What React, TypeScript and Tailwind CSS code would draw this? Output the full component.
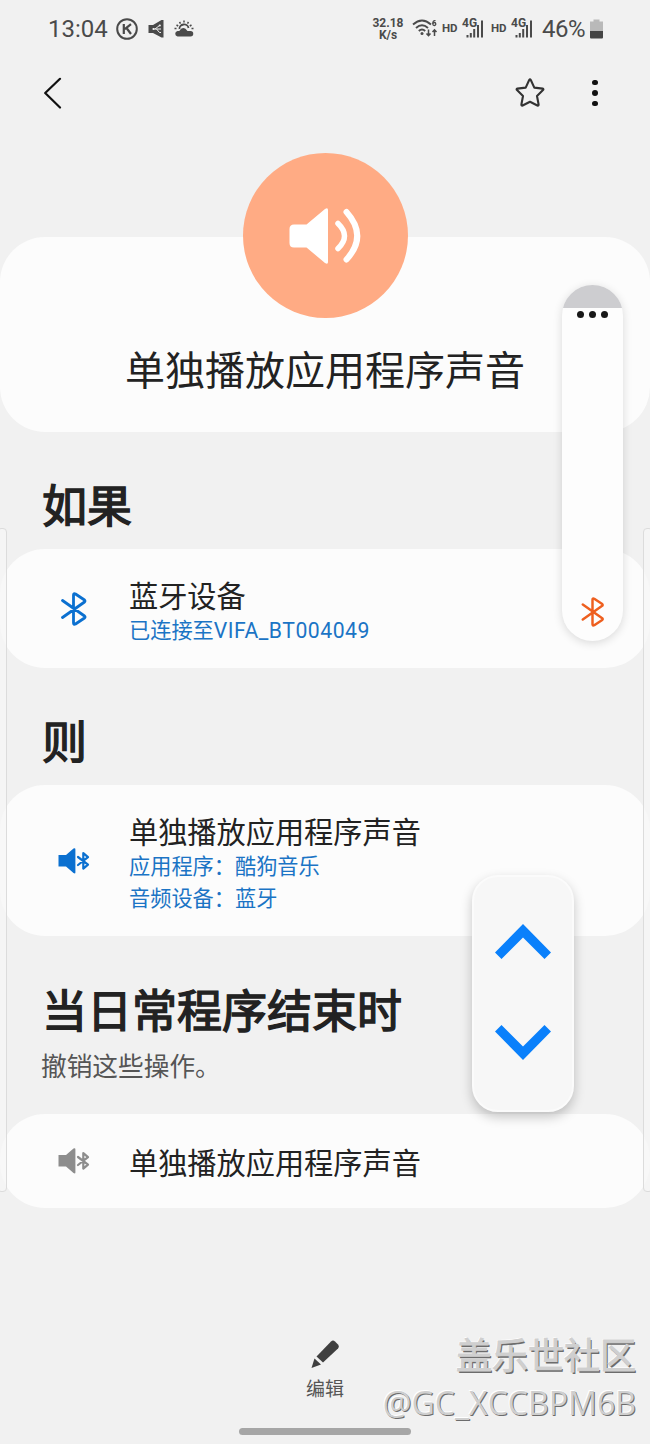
import React from 'react';

interface IconProps {
    className?: string;
}

const BluetoothIcon = ({ className }: IconProps) => (
    <svg viewBox="0 0 26 34" className={className} fill="none" stroke="currentColor" strokeWidth="2.8" strokeLinecap="round" strokeLinejoin="round">
        <path d="M2 8.5 L24 24 Q25 25 24 26 L15 32 Q13 33 13 31 V3 Q13 1 15 2 L24 8 Q25 9 24 10 L2 25.5" />
    </svg>
);

const SpeakerBluetoothIcon = ({ className }: IconProps) => (
    <svg viewBox="0 0 32 26" className={className}>
        <path d="M0.5 7 H8 L15.5 0.6 Q17.4 -0.4 17.4 1.5 V24.5 Q17.4 26 15.5 25 L8 18.6 H0.5 Z" fill="currentColor" />
        <path d="M20 9 L30 16.6 L25.3 20.6 V5.2 L30 9.2 L20 17" fill="none" stroke="currentColor" strokeWidth="2.2" strokeLinecap="round" strokeLinejoin="round" />
    </svg>
);

const SpeakerIcon = () => (
    <svg viewBox="0 0 72 58" className="h-[58px] w-[72px]" fill="none">
        <path d="M5 17.5 H17.5 L36 2 Q39 0 39 3 V55 Q39 58 36 56 L17.5 40.5 H5 Q0.5 40.5 0.5 36 V22 Q0.5 17.5 5 17.5 Z" fill="#fff" />
        <path d="M49 16.500 Q62 29 49 41.500" stroke="#fff" strokeWidth="5.500" strokeLinecap="round" />
        <path d="M57.500 5 Q79 29 57.500 52.500" stroke="#fff" strokeWidth="6" strokeLinecap="round" />
    </svg>
);

const SignalIcon = () => (
    <div className="relative h-5 w-[22px]">
        <svg viewBox="0 0 22 20" className="h-5 w-[22px]" fill="currentColor">
            <path d="M4.500 16h2v2.500h-2zM7.800 14h2v4.500h-2zM11.200 10h2v8.500h-2zM15 6h2v12.500h-2zM19 1.500h2v17h-2z" />
        </svg>
        <span className="absolute -top-[2px] left-0 text-[12px] font-bold leading-[13px]">4G</span>
    </div>
);

const StatusBar = () => (
    <div className="flex h-[57px] items-center pl-[48px] pr-[47px] text-[#4a4a4a]">
        <span className="w-[60px] whitespace-nowrap text-[24px] leading-none">13:04</span>
        <svg viewBox="0 0 22 22" className="ml-2 size-[22px]" fill="none" stroke="currentColor" strokeWidth="2">
            <circle cx="11" cy="11" r="9.800" />
            <path d="M7.800 6v10M15 6.200l-6.200 5M10.500 10l4.500 6" strokeWidth="2.200" />
        </svg>
        <svg viewBox="0 0 16 20" className="ml-[10px] h-5 w-4" fill="none">
            <path d="M0.500 6H5L13.500 1H15.500V18.500H13.500L5 14H0.500Z" fill="currentColor" />
            <path d="M5 10h8M7 10l4.500-3.500M8.500 10l3 3.500h1.500" stroke="#f1f1f1" strokeWidth="1" />
            <circle cx="11.800" cy="6.500" r="1.100" fill="#f1f1f1" />
            <circle cx="5.500" cy="10" r="1.100" fill="#f1f1f1" />
        </svg>
        <svg viewBox="0 0 20 18" className="ml-[10px] h-[18px] w-5" fill="none">
            <path d="M10 0.500v2M5.500 2l1 1.700M14.500 2l-1 1.700M2.500 5l1.700 1M17.500 5l-1.700 1M0.500 8.500h2M17.500 8.500h2" stroke="currentColor" strokeWidth="1.500" />
            <path d="M5.500 9A4.500 4 0 0 1 14.500 8" stroke="currentColor" strokeWidth="1.800" />
            <path d="M3.500 16.500a2.800 2.800 0 0 1 0-5.500h1.800q2.500-4.500 6.200-2.200l2 2.200h3a2.700 2.700 0 0 1 0 5.500z" fill="currentColor" />
        </svg>

        <div className="ml-auto flex items-center">
            <div className="flex w-[34px] flex-col text-center text-[12px] font-bold leading-[12px]">
                <span className="h-3">32.18</span>
                <span className="h-3">K/s</span>
            </div>
            <svg viewBox="0 0 26 20" className="ml-[7px] mr-[4px] h-5 w-[26px]" fill="none" stroke="currentColor" strokeWidth="1.900">
                <path d="M1 5.500Q10-2.500 19 5.500M4 9Q10 3.500 16 9M6.800 12Q10 9 13.200 12" />
                <circle cx="10" cy="14.500" r="1.500" fill="currentColor" stroke="none" />
                <path d="M16.500 10.500v6M14.500 14.500l2 2.200 2-2.200M22.500 17v-6M20.500 13l2-2.200 2 2.200" strokeWidth="1.500" />
                <path d="M23.500 1.700q-2.700-.6-2.700 3" strokeWidth="1.300" />
                <circle cx="22.300" cy="5" r="1.500" strokeWidth="1.300" />
            </svg>
            <span className="w-[17px] text-[11.500px] font-bold leading-none">HD</span>
            <div className="ml-[3px]"><SignalIcon /></div>
            <span className="ml-[7px] w-[17px] text-[11.500px] font-bold leading-none">HD</span>
            <div className="ml-[3px]"><SignalIcon /></div>
            <span className="ml-[9px] w-[45px] whitespace-nowrap text-[24px] leading-none tracking-[-0.500px]">46%</span>
            <svg viewBox="0 0 13 20" className="ml-[3px] h-5 w-[13px]">
                <path d="M3.500 0.500h6v2H13v10H0v-10h3.500z" fill="#b9b9b9" />
                <path d="M0 12h13v6.500q0 1-1 1H1q-1 0-1-1z" fill="#454545" />
            </svg>
        </div>
    </div>
);

const Toolbar = () => (
    <div className="flex h-[72px] items-center pl-[43px] pr-[52px]">
        <svg viewBox="0 0 20 32" className="h-8 w-5" fill="none" stroke="#111" strokeWidth="2.200" strokeLinecap="round" strokeLinejoin="round">
            <path d="M17 1.800L2.200 16L17 30.500" />
        </svg>
        <svg viewBox="0 0 30 30" className="ml-auto size-[30px]" fill="none" stroke="#333" strokeWidth="2.100" strokeLinejoin="round">
            <path d="M14.200 2 Q15 .8 15.800 2 L19.300 9.600 L27.600 10.600 Q29 11 28 12.100 L22 18 L23.600 26.500 Q23.700 28 22.400 27.500 L15 23.700 L7.600 27.500 Q6.300 28 6.400 26.500 L8 18 L2 12.100 Q1 11 2.400 10.600 L10.700 9.600 Z" />
        </svg>
        <div className="ml-[47px] flex w-[6px] flex-col gap-[5px]">
            <span className="size-[5.500px] rounded-full bg-[#111]" />
            <span className="size-[5.500px] rounded-full bg-[#111]" />
            <span className="size-[5.500px] rounded-full bg-[#111]" />
        </div>
    </div>
);

const SectionTitle = ({ children }: { children: React.ReactNode }) => (
    <h2 className="pl-[42px] text-[45px] leading-[60px] text-[#222] [-webkit-text-stroke:1.4px_#222]">{children}</h2>
);

const RoutineRow = ({ icon, title, details = [] }: { icon: React.ReactNode; title: string; details?: React.ReactNode[] }) => (
    <div className="flex h-full items-center pl-[58px]">
        <div className="flex w-[71px] items-center">{icon}</div>
        <div className={details.length ? 'pt-[9px]' : 'pt-[5px]'}>
            <p className="text-[29.200px] leading-[36px] text-[#222]">{title}</p>
            {details.map((detail, index) => (
                <p key={index} className="text-[21.200px] leading-8 text-[#1b74c5]">{detail}</p>
            ))}
        </div>
    </div>
);

const VolumePanel = () => (
    <div className="absolute left-[562px] top-[285px] flex h-[356px] w-[61px] flex-col items-center overflow-hidden rounded-full bg-[#fdfdfd] shadow-[0_2px_10px_rgba(0,0,0,0.14)]">
        <div className="h-[23px] w-full shrink-0 bg-[#cdcdd0]" />
        <div className="mt-[3px] flex gap-[5px]">
            <span className="size-[7px] rounded-full bg-[#181818]" />
            <span className="size-[7px] rounded-full bg-[#181818]" />
            <span className="size-[7px] rounded-full bg-[#181818]" />
        </div>
        <BluetoothIcon className="mb-[14px] mt-auto h-[30px] w-[23px] text-[#ee5f1f]" />
    </div>
);

const ScrollButtons = () => (
    <div className="absolute left-[472px] top-[875px] flex h-[237px] w-[102px] flex-col items-center justify-between rounded-[26px] border-2 border-[#fbfbfb] bg-[#f7f7f7] pb-[50px] pt-[47px] shadow-[0_5px_12px_rgba(0,0,0,0.22)]">
        <svg viewBox="0 0 56 35" className="h-[35px] w-14" fill="#0a80fb">
            <path d="M28 0L56 28.500L49.500 35L28 13.500L6.500 35L0 28.500Z" />
        </svg>
        <svg viewBox="0 0 56 35" className="h-[35px] w-14" fill="#0a80fb">
            <path d="M28 35L56 6.500L49.500 0L28 21.500L6.500 0L0 6.500Z" />
        </svg>
    </div>
);

const Watermark = () => (
    <div className="absolute right-[14px] top-[1334px] text-right text-[#cfcfcf]">
        <p className="text-[36px] leading-[46px] [-webkit-text-stroke:1px_#cfcfcf] [text-shadow:1.5px_1.5px_0_#6c6c6c,-1px_-1px_0_#fff]">盖乐世社区</p>
        <p className="font-['Open_Sans',sans-serif] text-[32.100px] leading-[46px] [text-shadow:1px_1px_0_#6c6c6c,-1px_-1px_0_#fff]">@GC_XCCBPM6B</p>
    </div>
);

const App = () => {
    return (
        <div lang="zh-CN" className="relative h-[1444px] w-[650px] overflow-hidden bg-[#f1f1f1] font-[Roboto,'Noto_Sans_CJK_SC',sans-serif]">
            <StatusBar />
            <Toolbar />

            <div className="mt-[108px] flex h-[195px] flex-col items-center rounded-[45px] bg-[#fcfcfc]">
                <div className="-mt-[84px] flex size-[165px] shrink-0 items-center justify-center rounded-full bg-[#ffab84]">
                    <SpeakerIcon />
                </div>
                <h1 className="mt-[27px] text-[40px] leading-[54px] text-[#222]">单独播放应用程序声音</h1>
            </div>

            <div className="mt-[46px]">
                <SectionTitle>如果</SectionTitle>
            </div>
            <div className="mt-[11px] h-[119px] rounded-[45px] bg-[#fcfcfc]">
                <RoutineRow
                    icon={<BluetoothIcon className="ml-[2px] h-[34px] w-[27px] text-[#0b70d0]" />}
                    title="蓝牙设备"
                    details={[<>已连接至<span className="tracking-[0.500px]">VIFA_BT004049</span></>]}
                />
            </div>

            <div className="mt-[46px]">
                <SectionTitle>则</SectionTitle>
            </div>
            <div className="mt-[11px] h-[151px] rounded-[45px] bg-[#fcfcfc]">
                <RoutineRow
                    icon={<SpeakerBluetoothIcon className="h-[26px] w-8 text-[#0b70d0]" />}
                    title="单独播放应用程序声音"
                    details={['应用程序：酷狗音乐', '音频设备：蓝牙']}
                />
            </div>

            <div className="mt-[47px]">
                <SectionTitle>当日常程序结束时</SectionTitle>
                <p className="mt-[6px] pl-[41px] text-[25.700px] leading-[36px] text-[#555]">撤销这些操作。</p>
            </div>
            <div className="mt-[29px] h-[94px] rounded-[45px] bg-[#fcfcfc]">
                <RoutineRow
                    icon={<SpeakerBluetoothIcon className="h-[26px] w-8 text-[#8d8d8d]" />}
                    title="单独播放应用程序声音"
                />
            </div>

            <div className="mt-[132px] flex flex-col items-center">
                <svg viewBox="0 0 28 28" className="size-7" fill="#3f3f3f">
                    <path d="M5.500 16.500L20 1.500Q22-.5 24 1.500L27 4.500Q28.500 6.500 27 8.500L12 22.500Z" />
                    <path d="M3.500 18.500L10 24.500L0.500 28Z" />
                </svg>
                <span className="mt-2 text-[19px] leading-7 text-[#555]">编辑</span>
            </div>
            <div className="mx-auto mt-[24px] h-[7px] w-[172px] rounded-full bg-[#a6a6a6]" />

            {/* edge panel handles */}
            <div className="absolute -left-[3px] top-[528px] h-[664px] w-[10px] rounded-[4px] border border-[#dcdcdc] bg-[#f6f6f6]/80" />
            <div className="absolute -right-[3px] top-[528px] h-[664px] w-[10px] rounded-[4px] border border-[#dcdcdc] bg-[#f6f6f6]/80" />

            <VolumePanel />
            <ScrollButtons />
            <Watermark />
        </div>
    );
};

export default App;
